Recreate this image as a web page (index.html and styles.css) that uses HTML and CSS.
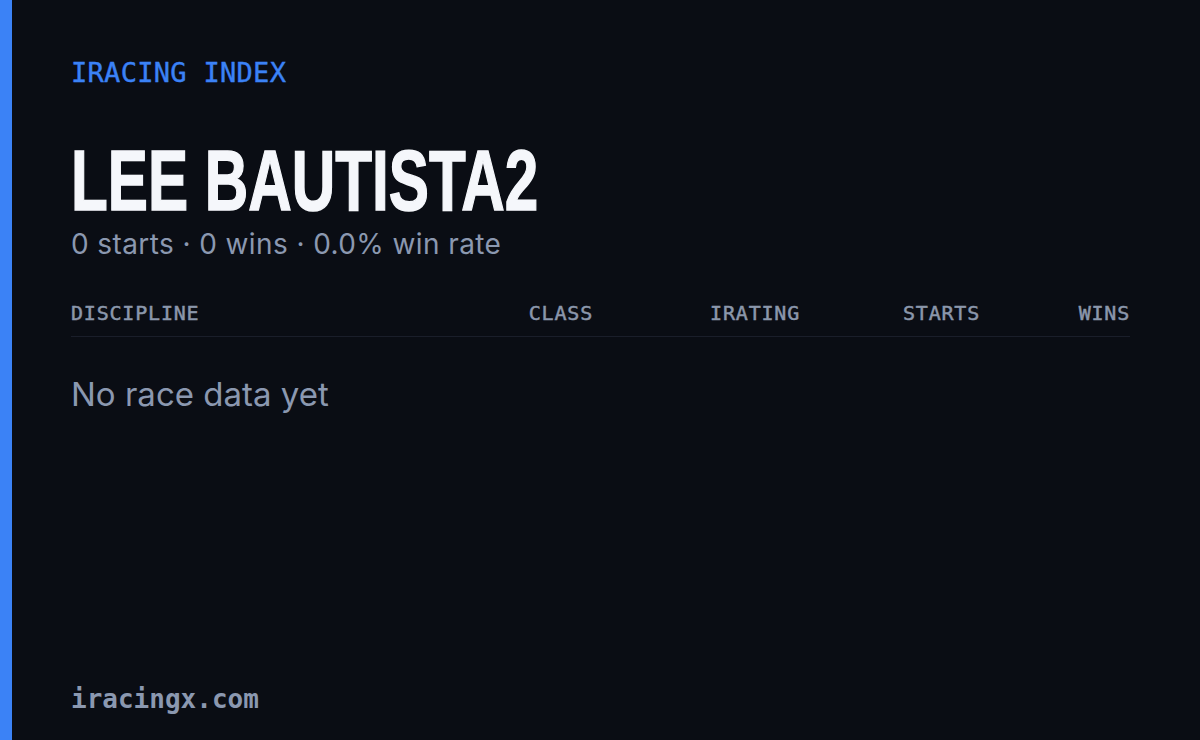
FILE: index.html
```html
<!DOCTYPE html>
<html>
<head>
<meta charset="utf-8">
<link rel="stylesheet" href="styles.css">
</head>
<body>
<div class="card">
  <div class="accent"></div>
  <main class="content">
    <div class="eyebrow">IRACING INDEX</div>
    <h1 class="name"><span class="name-text">LEE BAUTISTA2</span></h1>
    <div class="summary">0 starts · 0 wins · 0.0% win rate</div>
    <div class="table-head">
      <span class="col col-discipline">DISCIPLINE</span>
      <span class="col col-class">CLASS</span>
      <span class="col col-irating">IRATING</span>
      <span class="col col-starts">STARTS</span>
      <span class="col col-wins">WINS</span>
    </div>
    <div class="empty">No race data yet</div>
    <div class="footer">iracingx.com</div>
  </main>
</div>
</body>
</html>
```

FILE: styles.css
```css
html, body {
  margin: 0;
  padding: 0;
  background: #0a0d14;
}
.card {
  display: flex;
  width: 1200px;
  height: 740px;
  background: #0a0d14;
}
.accent {
  width: 12px;
  flex: none;
  background: #3b82f6;
}
.content {
  flex: 1;
  display: flex;
  flex-direction: column;
  padding: 0 70px 0 59px;
}
.eyebrow {
  font-family: "DejaVu Sans Mono", monospace;
  font-size: 27px;
  color: #3b82f6;
  letter-spacing: 0.3px;
  margin-top: 56px;
  line-height: 34px;
  -webkit-text-stroke: 0.4px #3b82f6;
}
.name {
  margin: 50px 0 0;
  font-family: "Liberation Sans", sans-serif;
  font-weight: 700;
  font-size: 86px;
  line-height: 80px;
  letter-spacing: 0;
  color: #f5f7fb;
  white-space: nowrap;
}
.name-text {
  display: inline-block;
  transform: scaleX(0.70);
  transform-origin: left center;
  -webkit-text-stroke: 1.5px #f5f7fb;
}
.summary {
  font-family: "Inter", sans-serif;
  font-size: 28px;
  line-height: 36px;
  letter-spacing: 0.4px;
  color: #8b98b0;
  margin-top: 6px;
}
.table-head {
  display: grid;
  grid-template-columns: 1fr 140px 207px 180px 150px;
  margin-top: 38px;
  padding-bottom: 10px;
  border-bottom: 1px solid #1a1e2a;
  font-family: "DejaVu Sans Mono", monospace;
  font-size: 20px;
  letter-spacing: 0.8px;
  color: #8b97ab;
  line-height: 26px;
  -webkit-text-stroke: 0.5px #8b97ab;
}
.col {
  text-align: right;
}
.col-discipline {
  text-align: left;
}
.empty {
  font-family: "Inter", sans-serif;
  font-size: 33px;
  line-height: 40px;
  color: #8b98b0;
  margin-top: 37px;
}
.footer {
  margin-top: auto;
  margin-bottom: 26px;
  font-family: "DejaVu Sans Mono", monospace;
  font-weight: 700;
  font-size: 26px;
  line-height: 30px;
  color: #8b98b0;
}
```
